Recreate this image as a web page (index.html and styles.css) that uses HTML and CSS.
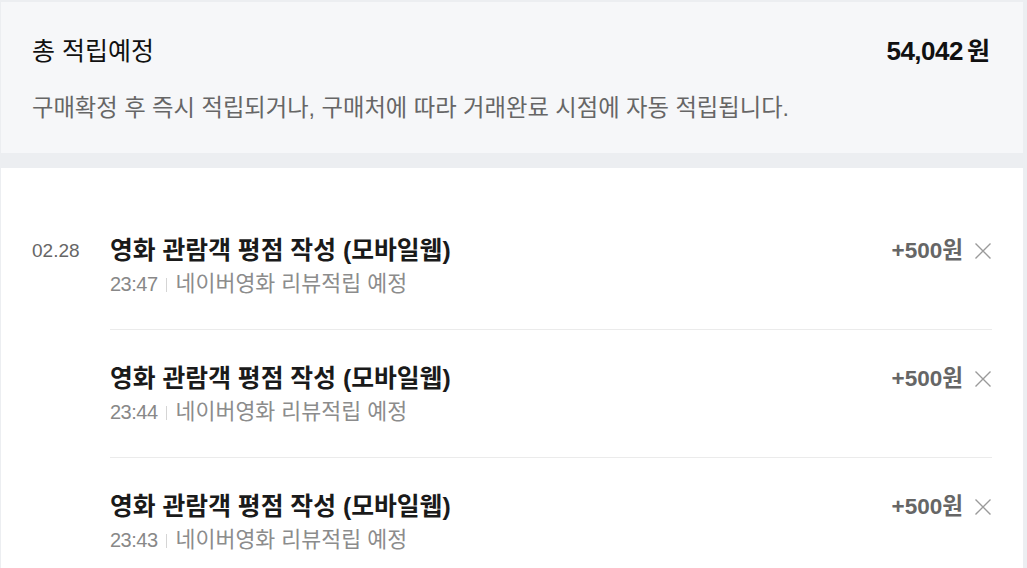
FILE: index.html
```html
<!DOCTYPE html>
<html lang="ko">
    <head>
        <meta charset="utf-8">
        <title>적립 예정 내역</title>
        <link rel="stylesheet" href="styles.css">
</head>
<body>
    <section class="summary">
        <div class="summary-head">
            <h2 class="summary-title">총 적립예정</h2>
            <strong class="summary-total">54,042<span class="won">원</span></strong>
        </div>
        <p class="summary-desc">구매확정 후 즉시 적립되거나, 구매처에 따라 거래완료 시점에 자동 적립됩니다.</p>
    </section>

    <section class="history">
        <ul class="days">
            <li class="day">
                <span class="day-date">02.28</span>
                <ul class="entries">
                    <li class="entry">
                        <div class="entry-text">
                            <p class="entry-title">영화 관람객 평점 작성 (모바일웹)</p>
                            <p class="entry-sub"><span class="entry-time">23:47</span><span class="entry-from">네이버영화 리뷰적립 예정</span></p>
                        </div>
                        <strong class="entry-amount">+500원</strong>
                        <button class="entry-del" type="button" aria-label="삭제">
                            <svg width="18" height="18" viewBox="0 0 18 18"><path d="M1.5 1.5l15 15M16.5 1.5l-15 15" stroke="#9a9a9a" stroke-width="1.4" fill="none"/></svg>
                        </button>
                    </li>
                    <li class="entry">
                        <div class="entry-text">
                            <p class="entry-title">영화 관람객 평점 작성 (모바일웹)</p>
                            <p class="entry-sub"><span class="entry-time">23:44</span><span class="entry-from">네이버영화 리뷰적립 예정</span></p>
                        </div>
                        <strong class="entry-amount">+500원</strong>
                        <button class="entry-del" type="button" aria-label="삭제">
                            <svg width="18" height="18" viewBox="0 0 18 18"><path d="M1.5 1.5l15 15M16.5 1.5l-15 15" stroke="#9a9a9a" stroke-width="1.4" fill="none"/></svg>
                        </button>
                    </li>
                    <li class="entry">
                        <div class="entry-text">
                            <p class="entry-title">영화 관람객 평점 작성 (모바일웹)</p>
                            <p class="entry-sub"><span class="entry-time">23:43</span><span class="entry-from">네이버영화 리뷰적립 예정</span></p>
                        </div>
                        <strong class="entry-amount">+500원</strong>
                        <button class="entry-del" type="button" aria-label="삭제">
                            <svg width="18" height="18" viewBox="0 0 18 18"><path d="M1.5 1.5l15 15M16.5 1.5l-15 15" stroke="#9a9a9a" stroke-width="1.4" fill="none"/></svg>
                        </button>
                    </li>
                </ul>
            </li>
        </ul>
    </section>
</body>
</html>
```

FILE: styles.css
```css
body {
    margin: 0;
    padding: 2px 4px 0 1px;

    font-family: "Liberation Sans", "Noto Sans CJK KR", sans-serif;
    color: #111;
    background-color: #eceef1;
}

p, h2, ul {
    margin: 0;
    padding: 0;
}

ul {
    list-style: none;
}

.summary {
    padding: 34px 33px 30px 31px;

    background-color: #f6f7f9;
}

.summary-head {
    display: flex;
    justify-content: space-between;
    align-items: center;
}

.summary-title {
    font-size: 25px;
    font-weight: normal;
    line-height: 30px;
}

.summary-total {
    font-size: 26px;
    line-height: 30px;
    letter-spacing: -0.5px;
}

.won {
    margin-left: 4px;

    font-size: 25px;
    letter-spacing: 0;
}

.summary-desc {
    margin-top: 27px;

    font-size: 23.3px;
    line-height: 30px;
    color: #666;
}

.history {
    min-height: 420px;
    margin-top: 15px;
    padding: 34px 31px 0 31px;

    background-color: #fff;
}

.day {
    display: grid;
    grid-template-columns: 78px 1fr;
}

.day-date {
    padding-top: 36px;

    font-size: 19px;
    line-height: 26px;
    color: #666;
}

.entry {
    display: flex;
    align-items: flex-start;
    padding: 36px 0 32px;

    border-bottom: 1px solid #ebebeb;
}

.entry:last-child {
    border-bottom: none;
}

.entry-text {
    flex: 1;
}

.entry-title {
    font-size: 24.8px;
    font-weight: bold;
    line-height: 26px;
    color: #1a1a1a;
}

.entry-sub {
    display: flex;
    align-items: center;
    margin-top: 7px;

    font-size: 21.7px;
    line-height: 26px;
    color: #8c8c8c;
}

.entry-time {
    font-size: 20px;
    letter-spacing: -0.5px;
    color: #888;
}

.entry-time::after {
    content: "";
    display: inline-block;
    width: 1px;
    height: 14px;
    margin: 0 9px 0 8px;

    vertical-align: -1px;
    background-color: #d5d5d5;
}

.entry-amount {
    font-size: 22.5px;
    line-height: 26px;
    color: #666;
}

.entry-del {
    display: flex;
    align-items: center;
    justify-content: center;
    width: 18px;
    height: 26px;
    margin-left: 11px;
    padding: 0;

    border: none;
    background: none;
}
```
